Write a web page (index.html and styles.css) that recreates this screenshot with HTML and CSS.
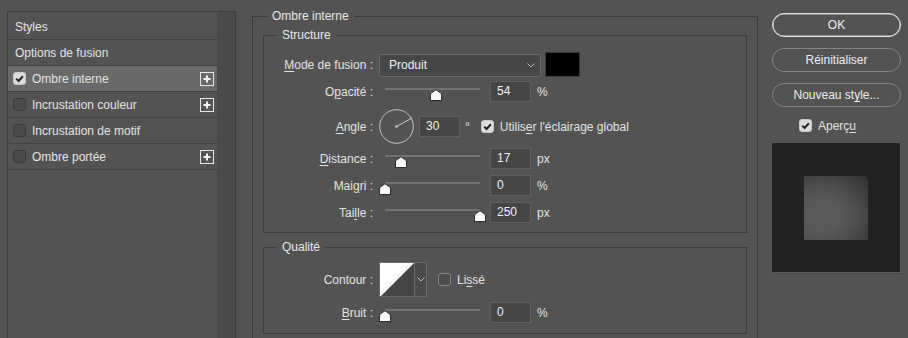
FILE: index.html
```html
<!DOCTYPE html>
<html lang="fr">
<head>
<meta charset="utf-8">
<title>Style de calque</title>
<link rel="stylesheet" href="styles.css">
</head>
<body>
<div class="dialog">
  <aside class="styles-panel">
    <div class="style-list">
      <div class="row title">Styles</div>
      <div class="row title">Options de fusion</div>
      <div class="row fx active">
        <span class="cb checked"><svg viewBox="0 0 13 13" width="13" height="13"><path d="M3.2 6.6 L5.6 9 L9.9 4.3" fill="none" stroke="#262626" stroke-width="2"/></svg></span>
        <span class="name">Ombre interne</span>
        <span class="plus"><svg viewBox="0 0 14 14" width="14" height="14"><rect x="0.5" y="0.5" width="13" height="13" fill="none" stroke="#e6e6e6"/><path d="M7 3.5 V10.5 M3.5 7 H10.5" stroke="#f0f0f0" stroke-width="2"/></svg></span>
      </div>
      <div class="row fx">
        <span class="cb"></span>
        <span class="name">Incrustation couleur</span>
        <span class="plus"><svg viewBox="0 0 14 14" width="14" height="14"><rect x="0.5" y="0.5" width="13" height="13" fill="none" stroke="#e6e6e6"/><path d="M7 3.5 V10.5 M3.5 7 H10.5" stroke="#f0f0f0" stroke-width="2"/></svg></span>
      </div>
      <div class="row fx">
        <span class="cb"></span>
        <span class="name">Incrustation de motif</span>
      </div>
      <div class="row fx">
        <span class="cb"></span>
        <span class="name">Ombre portée</span>
        <span class="plus"><svg viewBox="0 0 14 14" width="14" height="14"><rect x="0.5" y="0.5" width="13" height="13" fill="none" stroke="#e6e6e6"/><path d="M7 3.5 V10.5 M3.5 7 H10.5" stroke="#f0f0f0" stroke-width="2"/></svg></span>
      </div>
    </div>
    <div class="scroll"></div>
  </aside>

  <fieldset class="group outer">
    <legend>Ombre interne</legend>

    <fieldset class="group inner structure">
      <legend>Structure</legend>

      <div class="field f-mode">
        <span class="lbl"><u>M</u>ode de fusion :</span>
        <div class="select"><span>Produit</span><svg class="chev" viewBox="0 0 8 5" width="8" height="5"><path d="M0.5 0.5 L4 4 L7.5 0.5" fill="none" stroke="#b8b8b8"/></svg></div>
        <div class="swatch"></div>
      </div>

      <div class="field f-opa">
        <span class="lbl">O<u>p</u>acité :</span>
        <div class="slider"><div class="track"></div><svg class="thumb" style="left:51px" viewBox="0 0 12 12" width="12" height="12"><path d="M0.5 11.5 V6 Q0.5 4.5 2 3.5 L6 0.7 L10 3.5 Q11.5 4.5 11.5 6 V11.5 Z" fill="#fafafa" stroke="#2a2a2a"/></svg></div>
        <div class="num">54</div>
        <span class="unit">%</span>
      </div>

      <div class="field f-angle">
        <span class="lbl"><u>A</u>ngle :</span>
        <svg class="dial" viewBox="0 0 35 35" width="35" height="35"><circle cx="17.5" cy="17.5" r="16.8" fill="none" stroke="#c4c4c4"/><circle cx="17.5" cy="17.5" r="1.3" fill="#c4c4c4"/><path d="M17.5 17.5 L33 9" stroke="#d0d0d0"/></svg>
        <div class="num">30</div>
        <span class="deg">°</span>
        <span class="cb checked light"><svg viewBox="0 0 13 13" width="13" height="13"><path d="M3.2 6.6 L5.6 9 L9.9 4.3" fill="none" stroke="#262626" stroke-width="2"/></svg></span>
        <span class="cb-text">Utilis<u>e</u>r l'éclairage global</span>
      </div>

      <div class="field f-dist">
        <span class="lbl"><u>D</u>istance :</span>
        <div class="slider"><div class="track"></div><svg class="thumb" style="left:16px" viewBox="0 0 12 12" width="12" height="12"><path d="M0.5 11.5 V6 Q0.5 4.5 2 3.5 L6 0.7 L10 3.5 Q11.5 4.5 11.5 6 V11.5 Z" fill="#fafafa" stroke="#2a2a2a"/></svg></div>
        <div class="num">17</div>
        <span class="unit">px</span>
      </div>

      <div class="field f-maig">
        <span class="lbl">Mai<u>g</u>ri :</span>
        <div class="slider"><div class="track"></div><svg class="thumb" style="left:0px" viewBox="0 0 12 12" width="12" height="12"><path d="M0.5 11.5 V6 Q0.5 4.5 2 3.5 L6 0.7 L10 3.5 Q11.5 4.5 11.5 6 V11.5 Z" fill="#fafafa" stroke="#2a2a2a"/></svg></div>
        <div class="num">0</div>
        <span class="unit">%</span>
      </div>

      <div class="field f-taille">
        <span class="lbl">Tai<u>l</u>le :</span>
        <div class="slider"><div class="track"></div><svg class="thumb" style="left:95px" viewBox="0 0 12 12" width="12" height="12"><path d="M0.5 11.5 V6 Q0.5 4.5 2 3.5 L6 0.7 L10 3.5 Q11.5 4.5 11.5 6 V11.5 Z" fill="#fafafa" stroke="#2a2a2a"/></svg></div>
        <div class="num">250</div>
        <span class="unit">px</span>
      </div>
    </fieldset>

    <fieldset class="group inner quality">
      <legend>Qualité</legend>

      <div class="field f-contour">
        <span class="lbl">Contour :</span>
        <div class="contour">
          <svg class="curve" viewBox="0 0 34 33" width="34" height="33"><rect width="34" height="33" fill="#454545"/><polygon points="0,0 34,0 1,33 0,33" fill="#ffffff"/></svg>
          <div class="drop"><svg viewBox="0 0 8 5" width="8" height="5"><path d="M0.5 0.5 L4 4 L7.5 0.5" fill="none" stroke="#b8b8b8"/></svg></div>
        </div>
        <span class="cb outline"></span>
        <span class="cb-text">Li<u>s</u>sé</span>
      </div>

      <div class="field f-bruit">
        <span class="lbl"><u>B</u>ruit :</span>
        <div class="slider"><div class="track"></div><svg class="thumb" style="left:0px" viewBox="0 0 12 12" width="12" height="12"><path d="M0.5 11.5 V6 Q0.5 4.5 2 3.5 L6 0.7 L10 3.5 Q11.5 4.5 11.5 6 V11.5 Z" fill="#fafafa" stroke="#2a2a2a"/></svg></div>
        <div class="num">0</div>
        <span class="unit">%</span>
      </div>
    </fieldset>
  </fieldset>

  <div class="actions">
    <button class="btn primary">OK</button>
    <button class="btn">Réinitialiser</button>
    <button class="btn">Nouveau st<u>y</u>le...</button>
    <div class="preview-toggle">
      <span class="cb checked light"><svg viewBox="0 0 13 13" width="13" height="13"><path d="M3.2 6.6 L5.6 9 L9.9 4.3" fill="none" stroke="#262626" stroke-width="2"/></svg></span>
      <span class="cb-text">Aperç<u>u</u></span>
    </div>
    <div class="preview"><div class="sample"></div></div>
  </div>
</div>
</body>
</html>
```

FILE: styles.css
```css
* { box-sizing: border-box; }

html, body {
  margin: 0;
  padding: 0;
}

body {
  width: 908px;
  height: 338px;
  overflow: hidden;
  background: #535353;
  color: #e3e3e3;
  font-family: "Liberation Sans", Arial, sans-serif;
  font-size: 12px;
}

u { text-decoration: underline; text-underline-offset: 2px; }

.dialog {
  display: flex;
  align-items: flex-start;
}

/* ---------- left style list ---------- */
.styles-panel {
  display: flex;
  margin: 11px 0 0 7px;
  width: 229px;
  height: 327px;
  border: 1px solid #3d3d3d;
  border-bottom: none;
  flex: none;
}

.style-list {
  width: 209px;
  padding-top: 2px;
}

.scroll {
  width: 18px;
  background: #4a4a4a;
  align-self: stretch;
}

.row {
  display: flex;
  align-items: center;
  height: 26px;
  border-bottom: 1px solid #434343;
  padding-left: 7px;
  white-space: nowrap;
}

.row.fx { padding-left: 5px; }

.row.active { background: #696969; }

.row .name { margin-left: 6px; }

.plus {
  margin-left: auto;
  margin-right: 3px;
  width: 14px;
  height: 14px;
  display: block;
}
.plus svg { display: block; }

/* checkbox */
.cb {
  display: inline-block;
  width: 13px;
  height: 13px;
  border-radius: 3px;
  background: #4a4a4a;
  border: 1px solid #3b3b3b;
  flex: none;
}
.cb svg { display: block; margin: -1px; }
.cb.checked {
  background: #dcdcdc;
  border-color: #c8c8c8;
}
.cb.outline {
  border-color: #858585;
  background: #4e4e4e;
}

/* ---------- fieldsets ---------- */
.group {
  border: 1px solid #3b3b3b;
  min-width: 0;
}

.group > legend {
  padding: 0 5px;
  height: 16px;
  line-height: 16px;
  color: #e8e8e8;
}

.outer {
  flex: none;
  width: 506px;
  margin: 8px 0 0 16px;
  padding: 0 10px 4px;
  border-bottom: none;
}
.outer > legend { margin-left: 4px; }

.inner {
  margin-left: 0;
  margin-right: 0;
  margin-bottom: 0;
  padding: 0;
}
.inner > legend { margin-left: 13px; }

.structure { margin-top: 3px; padding-bottom: 9px; }
.quality { margin-top: 6px; padding-bottom: 10px; }

.field {
  display: flex;
  align-items: center;
  height: 21px;
  white-space: nowrap;
}

.lbl {
  flex: none;
  width: 109px;
  margin-right: 6px;
  text-align: right;
}

.f-mode { height: 25px; margin-top: 9px; }
.f-opa { margin-top: 4px; }
.f-angle { height: 35px; margin-top: 7px; }
.f-dist { margin-top: 4px; }
.f-maig { margin-top: 6px; }
.f-taille { margin-top: 6px; }
.f-contour { height: 35px; margin-top: 7px; }
.f-bruit { margin-top: 5px; }

/* select */
.select {
  display: flex;
  align-items: center;
  width: 162px;
  height: 23px;
  margin-top: 1px;
  padding: 0 5px 0 9px;
  background: #464646;
  border: 1px solid #6a6a6a;
  border-radius: 3px;
  color: #f0f0f0;
}
.select .chev { margin-left: auto; }

.swatch {
  width: 35px;
  height: 25px;
  margin-left: 4px;
  background: #000;
  border: 1px solid #3a3a3a;
}

/* slider */
.slider {
  position: relative;
  width: 111px;
  height: 21px;
  flex: none;
}
.track {
  position: absolute;
  left: 6px;
  top: 7px;
  width: 95px;
  height: 2px;
  background: #737373;
}
.thumb {
  position: absolute;
  top: 8px;
  display: block;
}

/* number field */
.num {
  width: 41px;
  height: 21px;
  padding-left: 6px;
  line-height: 19px;
  background: #454545;
  border: 1px solid #5f5f5f;
  color: #f0f0f0;
  flex: none;
}

.unit { margin-left: 6px; }

.dial { display: block; flex: none; }
.f-angle .num { margin-left: 5px; }
.deg { margin-left: 5px; }
.f-angle .cb { margin-left: 11px; }
.cb-text { margin-left: 6px; }

/* contour */
.contour {
  display: flex;
  height: 35px;
  border: 1px solid #6a6a6a;
  background: #464646;
}
.curve { display: block; }
.drop {
  width: 12px;
  border-left: 1px solid #6a6a6a;
  display: flex;
  align-items: center;
  justify-content: center;
  background: #4a4a4a;
}
.drop svg { display: block; }
.f-contour .cb { margin-left: 11px; }

/* ---------- right actions ---------- */
.actions {
  flex: none;
  width: 129px;
  margin: 13px 0 0 14px;
  display: flex;
  flex-direction: column;
}

.btn {
  height: 24px;
  margin: 0 0 11px;
  padding: 0;
  border: 1px solid #858585;
  border-radius: 12px;
  background: transparent;
  color: #ececec;
  font: inherit;
  text-align: center;
}
.btn.primary {
  border-color: #e2e2e2;
  box-shadow: inset 0 0 0 0.5px #d0d0d0;
}

.preview-toggle {
  display: flex;
  align-items: center;
  height: 13px;
  margin-top: 1px;
  padding-left: 27px;
}

.preview {
  width: 128px;
  height: 129px;
  margin-top: 11px;
  background: #222222;
  box-shadow: 1px 1px 0 #5e5e5e, 2px 2px 0 #4a4a4a;
  padding: 33px 0 0 32px;
}

.sample {
  width: 64px;
  height: 64px;
  background: radial-gradient(ellipse at 28% 62%, #5d5d5d 0%, #585858 30%, #4d4d4d 55%, #3d3d3d 80%, #2e2e2e 100%);
  border-radius: 0 5px 0 0;
}
```
